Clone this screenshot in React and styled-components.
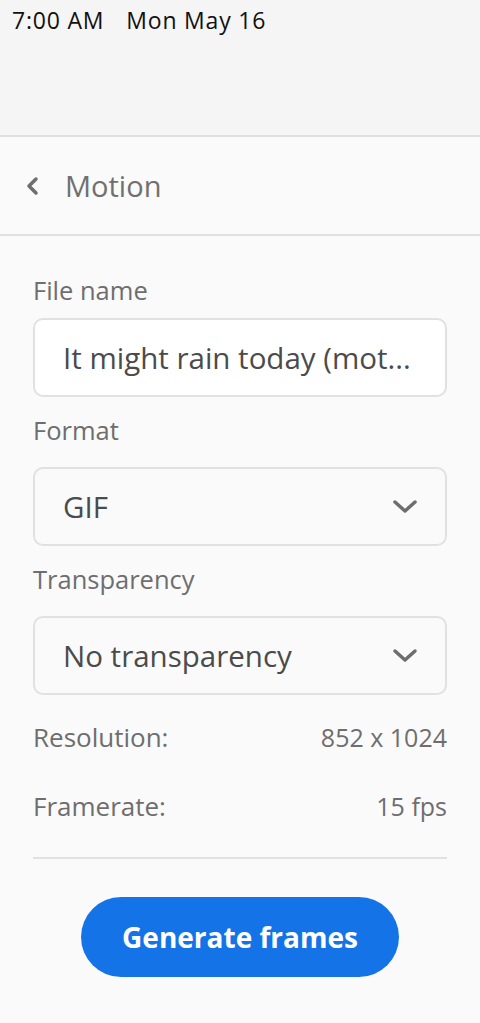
import React from "react";
import styled, { createGlobalStyle } from "styled-components";

const Global = createGlobalStyle`
  html, body { margin: 0; padding: 0; background: #fafafa; }
  body { font-family: "Open Sans", Lato, sans-serif; }
  * { box-sizing: border-box; }
`;

const Page = styled.div`
  width: 480px;
  min-height: 1023px;
  background: #fafafa;
  display: flex;
  flex-direction: column;
`;

const StatusBar = styled.div`
  height: 137px;
  background: #f5f5f5;
  border-bottom: 2px solid #e0e0e0;
  padding: 5px 12px 0;
  display: flex;
  gap: 22px;
  font-family: "Open Sans", sans-serif;
  font-size: 23px;
  letter-spacing: 0.8px;
  font-weight: 500;
  line-height: 30px;
  color: #111;
`;

const Header = styled.div`
  height: 99px;
  border-bottom: 2px solid #e0e0e0;
  display: flex;
  align-items: center;
  padding-left: 25px;
  gap: 26px;
  color: #6e6e6e;
`;

const Title = styled.span`
  font-size: 29px;
  line-height: 36px;
  color: #707070;
`;

const Content = styled.div`
  padding: 38px 33px 0;
  display: flex;
  flex-direction: column;
`;

const Label = styled.div`
  font-size: 25.5px;
  line-height: 32px;
  color: #6e6e6e;
  margin-top: ${(p) => p.$top || 0}px;
  margin-bottom: ${(p) => p.$bottom || 0}px;
`;

const Box = styled.div`
  height: 79px;
  border: 2px solid #e1e1e1;
  border-radius: 10px;
  background: ${(p) => (p.$white ? "#ffffff" : "#fafafa")};
  display: flex;
  align-items: center;
  justify-content: space-between;
  padding: 0 27px 0 28px;
  font-size: 29.5px;
  line-height: 36px;
  color: #4b4b4b;
  white-space: nowrap;
  overflow: hidden;
`;

const InfoRow = styled.div`
  display: flex;
  justify-content: space-between;
  align-items: baseline;
  font-size: 26px;
  line-height: 32px;
  color: #6e6e6e;
  margin-top: ${(p) => p.$top}px;
`;

const Value = styled.span`
  font-size: 25px;
`;

const Divider = styled.div`
  height: 2px;
  background: #e1e1e1;
  margin-top: 35px;
`;

const ButtonWrap = styled.div`
  display: flex;
  justify-content: center;
  margin-top: 38px;
`;

const Button = styled.button`
  width: 318px;
  height: 80px;
  border: none;
  border-radius: 40px;
  background: #1473e6;
  color: #fff;
  font-family: "Open Sans", sans-serif;
  font-size: 28px;
  font-weight: 700;
`;

const Chevron = () => (
  <svg width="26" height="16" viewBox="0 0 26 16">
    <path d="M3 3 L13 12 L23 3" fill="none" stroke="#6e6e6e" strokeWidth="3.5" strokeLinecap="round" strokeLinejoin="round" />
  </svg>
);

const Back = () => (
  <svg width="14" height="20" viewBox="0 0 14 20">
    <path d="M11 3 L4 10 L11 17" fill="none" stroke="#6e6e6e" strokeWidth="3.5" strokeLinecap="round" strokeLinejoin="round" />
  </svg>
);

export default function App() {
  return (
    <Page>
      <Global />
      <StatusBar>
        <span>7:00 AM</span>
        <span>Mon May 16</span>
      </StatusBar>
      <Header>
        <Back />
        <Title>Motion</Title>
      </Header>
      <Content>
        <Label $bottom={12}>File name</Label>
        <Box $white>It might rain today (mot...</Box>
        <Label $top={17} $bottom={21}>Format</Label>
        <Box>
          <span>GIF</span>
          <Chevron />
        </Box>
        <Label $top={17} $bottom={21}>Transparency</Label>
        <Box>
          <span>No transparency</span>
          <Chevron />
        </Box>
        <InfoRow $top={26}>
          <span>Resolution:</span>
          <Value>852 x 1024</Value>
        </InfoRow>
        <InfoRow $top={37}>
          <span>Framerate:</span>
          <Value>15 fps</Value>
        </InfoRow>
        <Divider />
        <ButtonWrap>
          <Button>Generate frames</Button>
        </ButtonWrap>
      </Content>
    </Page>
  );
}
